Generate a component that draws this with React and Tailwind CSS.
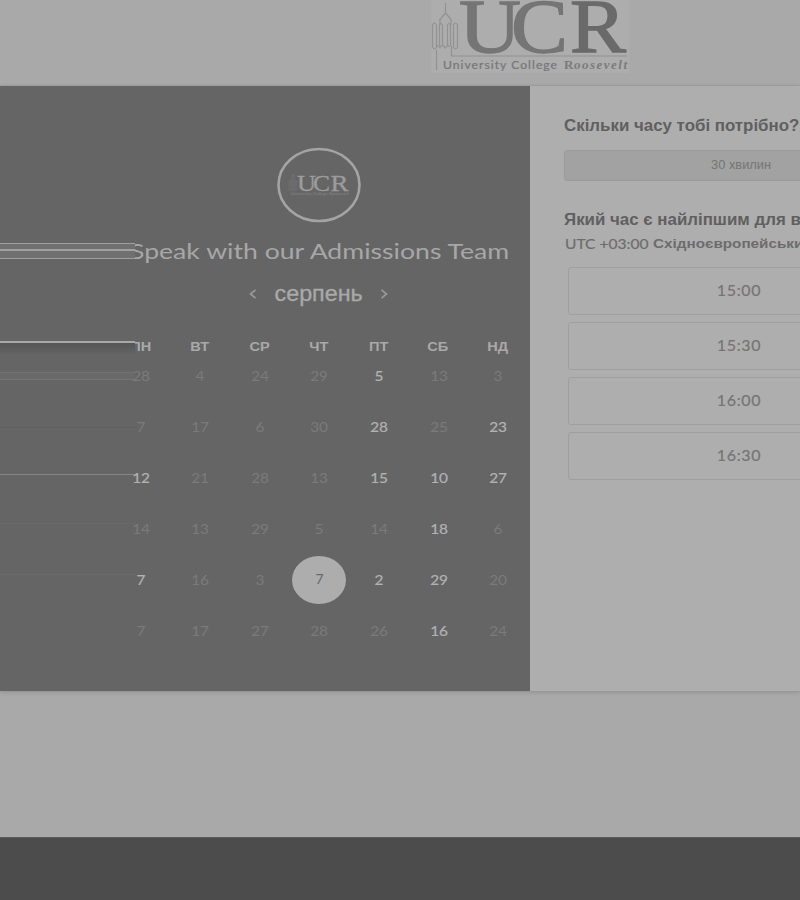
const weekdays = ["ПН", "ВТ", "СР", "ЧТ", "ПТ", "СБ", "НД"];

const weeks = [
  [[28], [4], [24], [29], [5, "on"], [13], [3]],
  [[7], [17], [6], [30], [28, "on"], [25], [23, "on"]],
  [[12, "on"], [21], [28], [13], [15, "on"], [10, "on"], [27, "on"]],
  [[14], [13], [29], [5], [14], [18, "on"], [6]],
  [[7, "on"], [16], [3], [7, "selected"], [2, "on"], [29, "on"], [20]],
  [[7], [17], [27], [28], [26], [16, "on"], [24]],
];

const times = ["15:00", "15:30", "16:00", "16:30"];

const sans = "font-['Liberation_Sans',sans-serif]";

function Logo() {
  return (
    <svg width="198" height="73" viewBox="431 0 198 73" className="ml-[431px] block bg-[#adadad]">
      <g fill="none" stroke="#929292" strokeWidth="1.2">
        <path d="M445.500 3v10M445.500 13l-6 7M445.500 13l6 7M440 19v6M451 19v6" />
        <path d="M432.500 25q2-4 4 0v22q-2 4-4 0zM453.500 25q2-4 4 0v22q-2 4-4 0zM439.500 25q1.500-3 3 0v20q-1.500 3-3 0zM447.500 25q1.500-3 3 0v20q-1.500 3-3 0z" />
        <path d="M436.500 45l4 3M443 45l2 3 3-3" />
        <path d="M436.500 50v20M451.500 46v10H627" />
      </g>
      <g fontFamily="Liberation Serif, serif" fill="#757575" stroke="#757575" strokeWidth="1.300">
        <text x="459" y="51.500" fontSize="76" textLength="62" lengthAdjust="spacingAndGlyphs">U</text>
        <text x="511" y="51.500" fontSize="76" textLength="57" lengthAdjust="spacingAndGlyphs">C</text>
        <text x="570" y="51.500" fontSize="76" textLength="56" lengthAdjust="spacingAndGlyphs" fill="#6a6a6a" stroke="#6a6a6a">R</text>
      </g>
      <text x="443" y="68.500" fontSize="10.500" fontFamily="Lato, sans-serif" fill="#777" stroke="#777" strokeWidth="0.2" letterSpacing="0.9" textLength="115" lengthAdjust="spacingAndGlyphs">University College</text>
      <text x="564" y="68.500" fontSize="13" fontFamily="Liberation Serif, serif" fontWeight="bold" fill="#7b7b7b">R</text>
      <text x="574" y="68.500" fontSize="13" fontFamily="Liberation Serif, serif" fontWeight="bold" fontStyle="italic" fill="#7b7b7b" textLength="53">oosevelt</text>
    </svg>
  );
}

function Badge() {
  return (
    <svg width="84" height="76" viewBox="0 0 84 76" className="block">
      <ellipse cx="42" cy="38" rx="40.500" ry="36" fill="none" stroke="#a4a4a4" strokeWidth="2.600" />
      <path d="M12 43V34h2v9zM15 44V30l1-3 1 3v14zM18 43V34h2v9z" fill="none" stroke="#777" strokeWidth="0.7" />
      <g fontFamily="Liberation Serif, serif" fill="#9c9c9c" stroke="#9c9c9c" strokeWidth="0.3" fontSize="24">
        <text x="20" y="43.500" textLength="19" lengthAdjust="spacingAndGlyphs">U</text>
        <text x="36" y="43.500" textLength="17" lengthAdjust="spacingAndGlyphs">C</text>
        <text x="53.500" y="43.500" textLength="18" lengthAdjust="spacingAndGlyphs">R</text>
      </g>
      <text x="14" y="48" fontSize="3.500" fontFamily="Lato, sans-serif" fill="#858585" textLength="58" lengthAdjust="spacingAndGlyphs">University College Roosevelt</text>
    </svg>
  );
}

function Chevron({ flip }) {
  return (
    <svg width="8" height="10" viewBox="0 0 8 10" className={flip ? "rotate-180" : ""}>
      <path d="M6.500 0.800 1.500 5l5 4.200" fill="none" stroke="#999" strokeWidth="1.700" />
    </svg>
  );
}

function Day({ value, state }) {
  if (state === "selected") {
    return (
      <div className="flex h-[51px] items-center justify-center">
        <span className="flex h-[48px] w-[54px] shrink-0 items-center justify-center rounded-[50%] bg-[#adadad] pb-[2px] text-[#696969]">
          {value}
        </span>
      </div>
    );
  }
  return (
    <div className={`flex h-[51px] items-center justify-center ${state ? "text-[#b2b2b2] [-webkit-text-stroke:0.2px_#b2b2b2]" : "text-[#7b7b7b]"}`}>
      <span className="inline-block scale-x-[1.1]">{value}</span>
    </div>
  );
}

/* Horizontal light streaks running from the left edge up to the calendar. */
function Streaks() {
  return (
    <div className="absolute left-0 top-0 w-[135px]">
      <div className="absolute top-[157px] h-[16px] w-full bg-[#707070]" />
      <div className="absolute top-[157px] h-px w-full bg-[#a0a0a0]" />
      <div className="absolute top-[163px] h-[2px] w-full bg-[#a0a0a0]" />
      <div className="absolute top-[172px] h-px w-full bg-[#a0a0a0]" />
      <div className="absolute top-[255px] h-[2px] w-full bg-[#a8a8a8]" />
      <div className="absolute top-[257px] h-[12px] w-full bg-linear-to-b from-[#555] to-[#656565]" />
      <div className="absolute top-[286px] h-[8px] w-full bg-[#696969]" />
      <div className="absolute top-[286px] h-px w-full bg-[#717171]" />
      <div className="absolute top-[293px] h-px w-full bg-[#757575]" />
      <div className="absolute top-[388px] h-px w-full bg-[#868686]" />
      <div className="absolute top-[341px] h-px w-full bg-[#606060]" />
      <div className="absolute top-[437px] h-px w-full bg-[#696969]" />
      <div className="absolute top-[488px] h-px w-full bg-[#6b6b6b]" />
    </div>
  );
}

function Calendar() {
  return (
    <section className="relative h-[605px] w-[530px] shrink-0 overflow-hidden bg-[#656565] pl-[111px] pt-[61px]">
      <div className="flex w-[415px] justify-center">
        <Badge />
      </div>
      <h1 className="ml-[19px] mt-[12px] h-[32px] origin-left scale-x-[1.210] whitespace-nowrap text-[22px] leading-[32px] text-[#a7a7a7]">
        <span>Speak with our Admissions Team</span>
      </h1>
      <div className="mt-[14px] flex h-[26px] w-[415px] items-center justify-center gap-[20px]">
        <Chevron />
        <span className={`inline-block scale-x-[1.060] text-[22px] leading-[26px] text-[#a9a9a9] [-webkit-text-stroke:0.3px_#a9a9a9] ${sans}`}>
          серпень
        </span>
        <Chevron flip />
      </div>
      <div className={`mt-[30px] grid h-[20px] w-[416px] grid-cols-7 text-center text-[13.500px] font-bold leading-[20px] text-[#a9a9a9] ${sans}`}>
        {weekdays.map((d) => (
          <span key={d} className="scale-x-[1.080]">{d}</span>
        ))}
      </div>
      <div className="-mt-[7px] grid w-[417px] grid-cols-7 text-[14px] leading-[20px]">
        {weeks.flat().map(([value, state], i) => (
          <Day key={i} value={value} state={state} />
        ))}
      </div>
      <Streaks />
    </section>
  );
}

function Booking() {
  return (
    <section className="h-[605px] w-[270px] overflow-hidden bg-[#aeaeae] pl-[34px] pt-[30px] text-[#606060]">
      <h2 className={`h-[20px] whitespace-nowrap text-[16px] font-bold leading-[20px] ${sans}`}>
        <span className="inline-block origin-left scale-x-[1.055]">Скільки часу тобі потрібно?</span>
      </h2>
      <div className={`mt-[14px] flex h-[31px] w-[354px] items-center justify-center rounded-[3px] border border-[#9b9b9b] bg-[#a2a2a2] pb-[2px] text-[12px] text-[#757575] ${sans}`}>
        <span className="inline-block scale-x-[1.070]">30 хвилин</span>
      </div>
      <h2 className={`mt-[29px] h-[20px] whitespace-nowrap text-[16px] font-bold leading-[20px] ${sans}`}>
        <span className="inline-block origin-left scale-x-[1.055]">Який час є найліпшим для вас?</span>
      </h2>
      <p className="mt-[4px] flex h-[20px] items-center gap-[4px] whitespace-nowrap pl-px text-[14px] leading-[20px] text-[#6c6c6c]">
        <span className="inline-block w-[84px] shrink-0 origin-left scale-x-[1.110] [-webkit-text-stroke:0.2px_#6c6c6c]">UTC +03:00</span>
        <span className={`inline-block shrink-0 origin-left scale-x-[1.130] text-[13.500px] font-bold ${sans}`}>Східноєвропейський час</span>
      </p>
      <div className="ml-[4px] mt-[13px] flex w-[342px] flex-col gap-[7px]">
        {times.map((t) => (
          <div key={t} className="flex h-[48px] items-center justify-center rounded-[3px] border border-[#9f9f9f] pb-[2px] text-[16px] tracking-[0.700px] text-[#757575] [-webkit-text-stroke:0.2px_#757575]">
            {t}
          </div>
        ))}
      </div>
    </section>
  );
}

export default function App() {
  return (
    <div className="flex h-[900px] w-[800px] flex-col overflow-hidden bg-[#a9a9a9] font-['Lato',sans-serif]">
      <header className="h-[86px] shrink-0 border-b border-[#a3a3a3]">
        <Logo />
      </header>
      <main className="flex h-[605px] shrink-0 shadow-[0_1px_4px_rgba(0,0,0,0.18)]">
        <Calendar />
        <Booking />
      </main>
      <footer className="mt-auto h-[63px] border-t border-[#5a5a5a] bg-[#4c4c4c]" />
    </div>
  );
}
